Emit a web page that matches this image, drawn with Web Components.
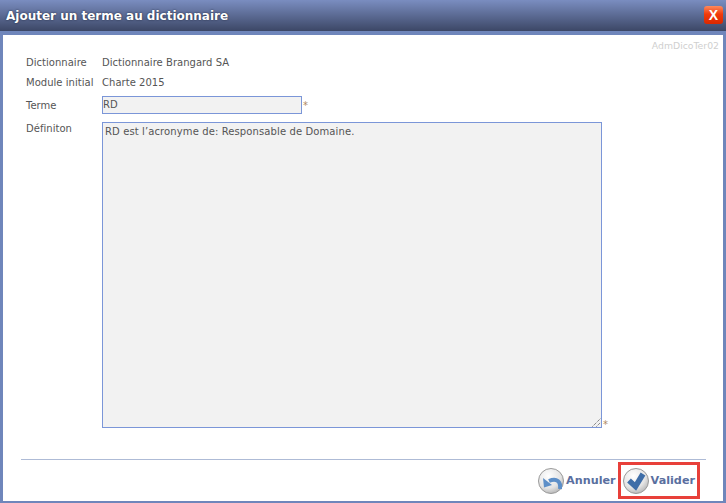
<!DOCTYPE html>
<html lang="fr">
<head>
<meta charset="utf-8">
<title>Ajouter un terme</title>
<style>
  html, body { margin: 0; padding: 0; background: #fff; }
  body { font-family: "DejaVu Sans", Verdana, sans-serif; }
</style>
</head>
<body>
<dico-dialog heading="Ajouter un terme au dictionnaire" code="AdmDicoTer02">
  <form-row label="Dictionnaire" h="15">Dictionnaire Brangard SA</form-row>
  <form-row label="Module initial" h="25">Charte 2015</form-row>
  <form-row label="Terme" h="18" style="margin-top:1px"><text-box req style="width:200px;height:18px">RD</text-box></form-row>
  <form-row label="Définiton" top style="margin-top:8px"><text-box req multi style="width:500px;height:306px">RD est l’acronyme de: Responsable de Domaine.</text-box></form-row>
  <round-button slot="actions" kind="undo">Annuler</round-button>
  <round-button slot="actions" kind="ok" hilite>Valider</round-button>
</dico-dialog>

<script>
class DicoDialog extends HTMLElement {
  constructor() {
    super();
    const shadow = this.attachShadow({ mode: 'open' });
    shadow.innerHTML = `
      <style>
        :host { display: flex; flex-direction: column; width: 726px; height: 503px; box-sizing: border-box;
          background: #6f86bb; padding: 0 3px 2px; overflow: hidden; }
        .title { flex: none; height: 31px; margin: 0 -3px 4px; padding: 0 3px 0 6px; display: flex; align-items: center; justify-content: space-between;
          background: linear-gradient(#7a8dc0, #3c4766);
          color: #fff; font: bold 12px "DejaVu Sans", sans-serif; text-shadow: 0 0 2px #1c2438; }
        .h { margin-top: 1px; }
        .close { width: 19px; height: 18px; margin-top: -1px; border-radius: 3px; display: flex; align-items: center; justify-content: center;
          background: linear-gradient(#ff8a5c, #f23a0c 45%, #d92800); color: #fff; font: bold 14px "Liberation Sans", sans-serif; text-shadow: none; }
        .body { flex: 1; background: #fff; display: flex; flex-direction: column; min-height: 0; }
        .code { height: 20px; padding: 5px 4px 0 0; box-sizing: border-box; text-align: right; font-size: 9.3px; color: #cfcfcf; }
        .rows { flex: 1; padding: 0 0 0 23px; }
        .foot { margin-left: 18px; margin-right: 17px; border-top: 1px solid #aebbd6; display: flex; justify-content: flex-end; align-items: flex-start; height: 42px; gap: 2px; padding: 2px 6px 0 0; box-sizing: border-box; }
      </style>
      <div class="title"><span class="h"></span><span class="close">X</span></div>
      <div class="body">
        <div class="code"></div>
        <div class="rows"><slot></slot></div>
        <div class="foot"><slot name="actions"></slot></div>
      </div>`;
    shadow.querySelector('.h').textContent = this.getAttribute('heading');
    shadow.querySelector('.code').textContent = this.getAttribute('code');
  }
}
customElements.define('dico-dialog', DicoDialog);

class FormRow extends HTMLElement {
  constructor() {
    super();
    const shadow = this.attachShadow({ mode: 'open' });
    shadow.innerHTML = `
      <style>
        :host { display: grid; grid-template-columns: 76px 1fr; align-items: center; font-size: 10px; color: #555; letter-spacing: .03px; }
        :host([top]) { align-items: start; }
        :host([top]) .l { padding-top: 1px; }
      </style>
      <span class="l"></span><div><slot></slot></div>`;
    shadow.querySelector('.l').textContent = this.getAttribute('label');
    if (this.getAttribute('h')) this.style.height = this.getAttribute('h') + 'px';
  }
}
customElements.define('form-row', FormRow);

class TextBox extends HTMLElement {
  constructor() {
    super();
    const shadow = this.attachShadow({ mode: 'open' });
    shadow.innerHTML = `
      <style>
        :host { display: block; position: relative; box-sizing: border-box; background: #f2f2f2; border: 1px solid #7b96d8;
          font-size: 10px; color: #555; padding: 2px 0; }
        :host([multi]) { padding: 3px 2px; letter-spacing: .11px; }
        .star { position: absolute; left: 100%; bottom: 2px; margin-left: 2px; color: #b08a60; font-size: 10px; }
        :host([multi]) .star { bottom: -3px; }
        svg { position: absolute; right: 0; bottom: 0; display: none; }
        :host([multi]) svg { display: block; }
      </style>
      <slot></slot><span class="star">*</span>
      <svg width="9" height="9" viewBox="0 0 9 9"><path d="M0.5 8.5L8.5 0.5M4.5 8.5L8.5 4.5" stroke="#555" stroke-dasharray="1 1" fill="none"/></svg>`;
  }
}
customElements.define('text-box', TextBox);

class RoundButton extends HTMLElement {
  constructor() {
    super();
    const shadow = this.attachShadow({ mode: 'open' });
    const undo = `<path d="M22 21C23 14 19 9.500 11 13" fill="none" stroke="#5d8fc8" stroke-width="4"/><path d="M5 10L6 19.500L14 17Z" fill="#5d8fc8"/>`;
    const ok = `<path d="M6 12.500L12.500 18.500L20 6" fill="none" stroke="#3f6ea8" stroke-width="5.500"/>`;
    shadow.innerHTML = `
      <style>
        :host { display: inline-flex; align-items: center; gap: 2px; height: 37px; font: bold 11.2px "DejaVu Sans", sans-serif; color: #5a6f9f; box-sizing: border-box; }
        :host([hilite]) { border: 3px solid #e8403a; padding: 0 2px; }
        svg { flex: none; }
      </style>
      <svg width="26" height="26" viewBox="0 0 26 26">
        <defs><radialGradient id="g" cx=".4" cy=".3" r=".8"><stop offset="0" stop-color="#fff"/><stop offset=".6" stop-color="#e4e4e4"/><stop offset="1" stop-color="#a9a9a9"/></radialGradient></defs>
        <circle cx="13" cy="13" r="12.500" fill="url(#g)" stroke="#9a9a9a"/>
        ${this.getAttribute('kind') === 'ok' ? ok : undo}
      </svg><slot></slot>`;
  }
}
customElements.define('round-button', RoundButton);
</script>
</body>
</html>
